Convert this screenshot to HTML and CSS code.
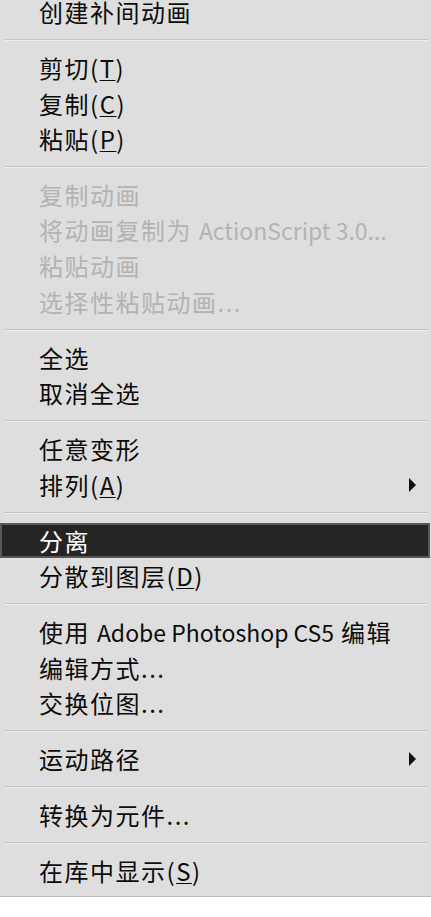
FILE: index.html
```html
<!DOCTYPE html>
<html lang="zh-CN">
<head>
<meta charset="utf-8">
<title>菜单</title>
<link rel="stylesheet" href="styles.css">
</head>
<body>
<div class="menu">
  <div class="item"><span>创建补间动画</span></div>
  <div class="sep"><span></span></div>
  <div class="item"><span>剪切(<u>T</u>)</span></div>
  <div class="item"><span>复制(<u>C</u>)</span></div>
  <div class="item"><span>粘贴(<u>P</u>)</span></div>
  <div class="sep"><span></span></div>
  <div class="item disabled"><span>复制动画</span></div>
  <div class="item disabled"><span>将动画复制为 <span class="lat">ActionScript 3.0...</span></span></div>
  <div class="item disabled"><span>粘贴动画</span></div>
  <div class="item disabled"><span>选择性粘贴动画...</span></div>
  <div class="sep"><span></span></div>
  <div class="item"><span>全选</span></div>
  <div class="item"><span>取消全选</span></div>
  <div class="sep"><span></span></div>
  <div class="item"><span>任意变形</span></div>
  <div class="item"><span>排列(<u>A</u>)</span><i class="arrow"></i></div>
  <div class="sep"><span></span></div>
  <div class="item active"><span>分离</span></div>
  <div class="item"><span>分散到图层(<u>D</u>)</span></div>
  <div class="sep"><span></span></div>
  <div class="item"><span>使用 <span class="lat">Adobe Photoshop CS5</span> 编辑</span></div>
  <div class="item"><span>编辑方式...</span></div>
  <div class="item"><span>交换位图...</span></div>
  <div class="sep"><span></span></div>
  <div class="item"><span>运动路径</span><i class="arrow"></i></div>
  <div class="sep"><span></span></div>
  <div class="item"><span>转换为元件...</span></div>
  <div class="sep"><span></span></div>
  <div class="item"><span>在库中显示(<u>S</u>)</span></div>
</div>
</body>
</html>
```
FILE: styles.css
```css
html, body {
  margin: 0;
  padding: 0;
  background: #ffffff;
}

body {
  font-family: "Noto Sans CJK SC", "Noto Sans", sans-serif;
  color: #0c0c0c;
}

.menu {
  margin-top: -5.75px;
  background: #dedede;
  padding-bottom: 7px;
  border-bottom: 1px solid #b9b9b9;
}

.item {
  box-sizing: border-box;
  height: 35.5px;
  line-height: 35.5px;
  padding: 0 15px 0 39px;
  font-size: 24px;
  letter-spacing: 1.5px;
  white-space: nowrap;
  display: flex;
  align-items: center;
  justify-content: space-between;
}

.item .lat {
  font-size: 23px;
  letter-spacing: 0;
}

.item u {
  text-decoration-thickness: 1px;
  text-underline-offset: 2px;
}

.item.disabled {
  color: #b3b3b3;
}

.item.active {
  width: 430px;
  background: #242424;
  color: #ffffff;
  border: 2px solid #575757;
  padding-left: 37px;
}

.arrow {
  display: block;
  width: 0;
  height: 0;
  border-left: 7px solid #111;
  border-top: 7px solid transparent;
  border-bottom: 7px solid transparent;
}

.sep {
  height: 20.5px;
  display: flex;
  align-items: center;
  padding: 0 3px 0 5px;
}

.sep span {
  flex: 1;
  border-top: 1px solid #c3c3c3;
  border-bottom: 1px solid #eeeeee;
}
```
